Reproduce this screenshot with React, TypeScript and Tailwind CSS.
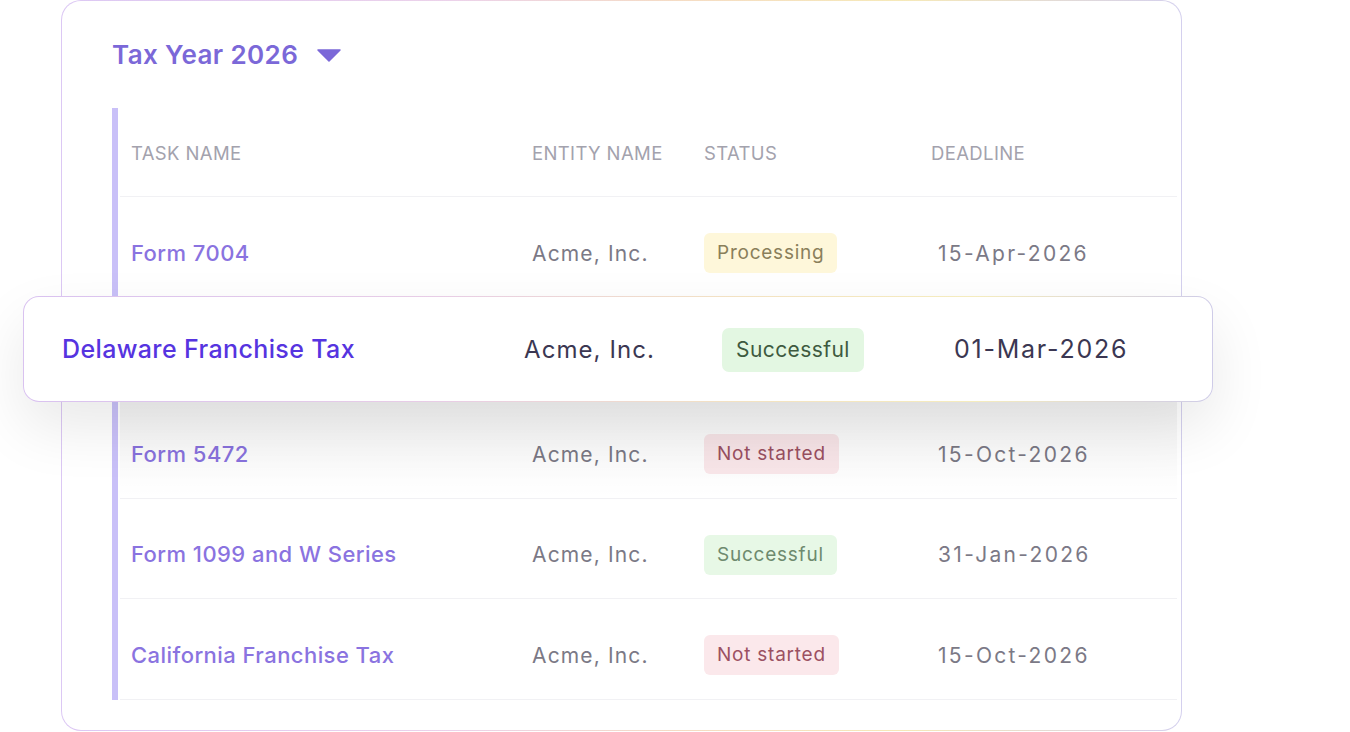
import React from "react";

type Status = "Processing" | "Successful" | "Not started";

const rows: { name: string; entity: string; status: Status; deadline: string; hidden?: boolean }[] = [
  { name: "Form 7004", entity: "Acme, Inc.", status: "Processing", deadline: "15-Apr-2026" },
  { name: "Delaware Franchise Tax", entity: "Acme, Inc.", status: "Successful", deadline: "01-Mar-2026", hidden: true },
  { name: "Form 5472", entity: "Acme, Inc.", status: "Not started", deadline: "15-Oct-2026" },
  { name: "Form 1099 and W Series", entity: "Acme, Inc.", status: "Successful", deadline: "31-Jan-2026" },
  { name: "California Franchise Tax", entity: "Acme, Inc.", status: "Not started", deadline: "15-Oct-2026" },
];

function Badge({ status }: { status: Status }) {
  const cls =
    status === "Processing"
      ? "bg-[#fef7da] text-[#8a7f5a]"
      : status === "Successful"
      ? "bg-[#e7f8e6] text-[#6e8a6e]"
      : "bg-[#fbe8eb] text-[#9b5162]";
  return (
    <span className={`inline-flex h-[40px] items-center rounded-[6px] px-[13px] text-[19px] tracking-[0.04em] ${cls}`}>
      {status}
    </span>
  );
}

export default function App() {
  return (
    <div
      className="relative h-[732px] w-[1350px] overflow-hidden bg-white"
      style={{ fontFamily: "Inter, 'Noto Sans', sans-serif" }}
    >
      <div className="absolute left-[61px] top-0 h-[731px] w-[1121px] rounded-[20px] bg-[linear-gradient(90deg,#dcc8f4_0%,#ecd2ea_35%,#f5dcc4_55%,#f6e9b8_75%,#d4d0ee_100%)] p-px">
        <div className="flex h-full w-full flex-col rounded-[19px] bg-white pl-[50px] pr-[4px]">
          <div className="mt-[38px] flex h-[32px] items-center gap-[19px]">
            <span className="text-[26px] font-semibold leading-[32px] tracking-[0.015em] text-[#7b68d8]">
              Tax Year 2026
            </span>
            <svg width="24" height="13" viewBox="0 0 24 13" className="mt-[1px]">
              <path d="M1 1 L23 1 L12 12 Z" fill="#7b68d8" stroke="#7b68d8" strokeWidth="1.5" strokeLinejoin="round" />
            </svg>
          </div>
          <div className="mt-[37px] flex">
            <div className="w-[6px] bg-[#c9c0f8]" />
            <div className="ml-[2px] flex-1">
              <div className="grid h-[89px] grid-cols-[401px_172px_227px_1fr] items-center border-b border-[#f1f1f4] pl-[11px] pt-[3px] text-[18.5px] tracking-[0.02em] text-[#a3a2ad]">
                <span>TASK NAME</span>
                <span>ENTITY NAME</span>
                <span>STATUS</span>
                <span>DEADLINE</span>
              </div>
              {rows.map((r, i) => (
                <div
                  key={i}
                  className="grid h-[100.5px] grid-cols-[401px_172px_227px_1fr] items-center border-b border-[#f1f1f4] pl-[11px] pt-[13px]"
                >
                  {r.hidden ? (
                    <>
                      <span className="invisible" />
                      <span className="invisible" />
                      <span className="invisible" />
                      <span className="invisible" />
                    </>
                  ) : (
                    <>
                      <span className="text-[22px] font-medium tracking-[0.02em] text-[#8a73e0]">{r.name}</span>
                      <span className="text-[21px] tracking-[0.055em] text-[#7b7986]">{r.entity}</span>
                      <span>
                        <Badge status={r.status} />
                      </span>
                      <span className="pl-[7px] text-[21px] tracking-[0.11em] text-[#7b7986]">{r.deadline}</span>
                    </>
                  )}
                </div>
              ))}
            </div>
          </div>
        </div>
      </div>

      {/* shadow fade over rows below overlay */}
      <div className="pointer-events-none absolute left-[120px] top-[398px] h-[100px] w-[1057px] bg-[linear-gradient(180deg,rgba(0,0,0,0.05),rgba(0,0,0,0))]" />

      <div className="absolute left-[23px] top-[296px] h-[106px] w-[1190px] rounded-[16px] bg-[linear-gradient(90deg,#d9c2f0_0%,#e8cde6_35%,#f3e2c2_60%,#f5ecbe_80%,#cfcce8_100%)] p-px shadow-[0_26px_60px_rgba(0,0,0,0.09)]">
        <div className="grid h-full w-full grid-cols-[462px_198px_232px_1fr] items-center rounded-[15px] bg-white pl-[38px] pt-[2px]">
          <span className="text-[25px] font-medium tracking-[0.015em] text-[#5634e0]">Delaware Franchise Tax</span>
          <span className="text-[24px] tracking-[0.045em] text-[#3b3752]">Acme, Inc.</span>
          <span>
            <span className="inline-flex h-[44px] items-center rounded-[7px] bg-[#e3f7e2] px-[14px] text-[21px] tracking-[0.02em] text-[#3e5a3f]">
              Successful
            </span>
          </span>
          <span className="text-[25px] tracking-[0.07em] text-[#3b3752]">01-Mar-2026</span>
        </div>
      </div>
    </div>
  );
}
